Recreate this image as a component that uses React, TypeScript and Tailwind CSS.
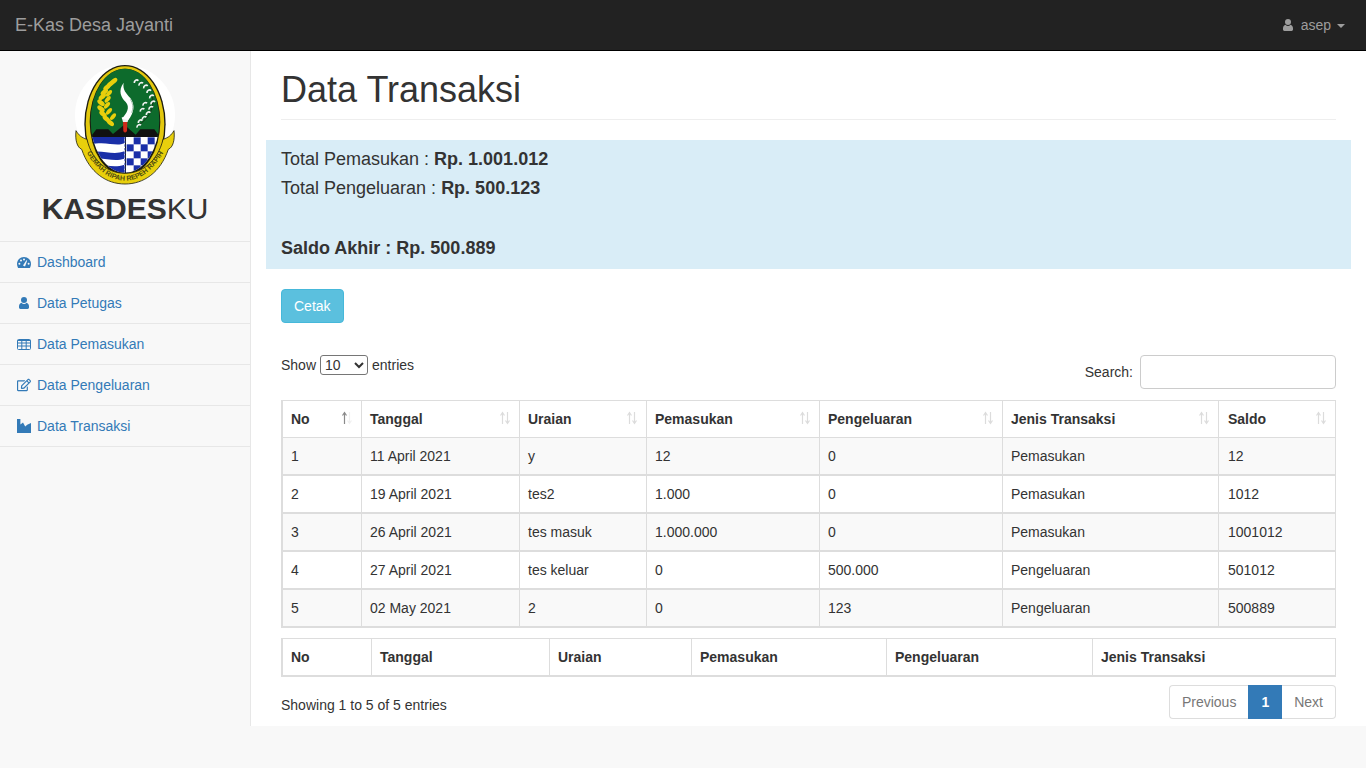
import { FaRegEdit } from 'react-icons/fa';

function GaugeIcon() {
  return (
    <svg width="14" height="11" viewBox="0 0 14 11" fill="currentColor">
      <path d="M7 0C3 0 0 3 0 7c0 1.5.4 2.8 1.1 4h11.8c.7-1.2 1.1-2.5 1.1-4 0-4-3-7-7-7z" />
      <g fill="#f8f8f8">
        <circle cx="2.4" cy="6.8" r="1" />
        <circle cx="4" cy="3.6" r="1" />
        <circle cx="7" cy="2.4" r="1" />
        <circle cx="11.6" cy="6.8" r="1" />
        <path d="M6 8.6 9.4 3.2 10.2 3.6 8 9.4z" />
      </g>
    </svg>
  );
}

function UserIcon() {
  return (
    <svg width="10" height="12" viewBox="0 0 10 12" fill="currentColor">
      <circle cx="5" cy="3" r="3" />
      <path d="M0 10.6V9.2C0 7.4 1.1 6.2 2.5 5.8 3.2 6.6 4 7 5 7s1.8-.4 2.5-1.2c1.4.4 2.5 1.6 2.5 3.4v1.4c0 .8-.6 1.4-1.4 1.4H1.4C.6 12 0 11.4 0 10.6z" />
    </svg>
  );
}

function TableIcon() {
  return (
    <svg width="14" height="11" viewBox="0 0 14 11" fill="none" stroke="currentColor">
      <rect x="0.5" y="0.5" width="13" height="10" rx="1" />
      <path d="M.5 1.5h13M.5 4h13M.5 7h13M4.8.5v10M9.2.5v10" />
    </svg>
  );
}

function AreaIcon() {
  return (
    <svg width="14" height="14" viewBox="0 0 14 14" fill="currentColor">
      <path d="M0 0h3.4v5.4L6 3.4l2.2 4 2-1.6L14 4v10H0z" />
    </svg>
  );
}

const menu = [
  { label: 'Dashboard', icon: <GaugeIcon /> },
  { label: 'Data Petugas', icon: <UserIcon /> },
  { label: 'Data Pemasukan', icon: <TableIcon /> },
  { label: 'Data Pengeluaran', icon: <FaRegEdit className="text-[14px]" /> },
  { label: 'Data Transaksi', icon: <AreaIcon /> },
];

const columns = [
  { name: 'No', width: 'w-[79px]' },
  { name: 'Tanggal', width: 'w-[158px]' },
  { name: 'Uraian', width: 'w-[127px]' },
  { name: 'Pemasukan', width: 'w-[173px]' },
  { name: 'Pengeluaran', width: 'w-[183px]' },
  { name: 'Jenis Transaksi', width: 'w-[216px]' },
  { name: 'Saldo', width: 'w-[117px]' },
];

const footerColumns = [
  { name: 'No', width: 'w-[89px]' },
  { name: 'Tanggal', width: 'w-[178px]' },
  { name: 'Uraian', width: 'w-[142px]' },
  { name: 'Pemasukan', width: 'w-[195px]' },
  { name: 'Pengeluaran', width: 'w-[206px]' },
  { name: 'Jenis Transaksi', width: 'w-[243px]' },
];

const rows = [
  ['1', '11 April 2021', 'y', '12', '0', 'Pemasukan', '12'],
  ['2', '19 April 2021', 'tes2', '1.000', '0', 'Pemasukan', '1012'],
  ['3', '26 April 2021', 'tes masuk', '1.000.000', '0', 'Pemasukan', '1001012'],
  ['4', '27 April 2021', 'tes keluar', '0', '500.000', 'Pengeluaran', '501012'],
  ['5', '02 May 2021', '2', '0', '123', 'Pengeluaran', '500889'],
];

function SortIcon({ active }: { active?: boolean }) {
  return (
    <svg width="12" height="14" viewBox="0 0 12 14" className="absolute right-[8px] top-[10px]" fill="none" strokeWidth="1.2">
      <path d="M3.5 13V2M1.5 4.5 3.5 1.5 5.5 4.5" stroke={active ? '#8a8a8a' : '#dcdcdc'} />
      <path d="M8.5 1V12M6.5 9.5 8.5 12.5 10.5 9.5" stroke={active ? '#f0f0f0' : '#dcdcdc'} />
    </svg>
  );
}

function Logo() {
  const checks: [number, number][] = [];
  for (let r = 0; r < 6; r++) {
    for (let c = 0; c < 5; c++) {
      if ((r + c) % 2 === 1) checks.push([185 + c * 21, 232 + r * 21]);
    }
  }
  return (
    <svg width="120" height="130" viewBox="0 0 360 390" className="shrink-0">
      <defs>
        <clipPath id="inner">
          <ellipse cx="180" cy="182" rx="103" ry="156" />
        </clipPath>
      </defs>
      <circle cx="180" cy="165" r="150" fill="#ffffff" />
      <ellipse cx="180" cy="192" rx="122" ry="177" fill="#1c1c10" />
      <ellipse cx="180" cy="192" rx="118" ry="173" fill="#e3c80e" />
      <ellipse cx="180" cy="186" rx="106" ry="160" fill="#1c1c10" />
      <g clipPath="url(#inner)">
        <rect x="70" y="20" width="220" height="212" fill="#0d6b2c" />
        <path d="M76 232 94 208H130L144 222 178 194 212 224 226 208H268L286 232Z" fill="#111111" />
        <rect x="70" y="231" width="110" height="110" fill="#ffffff" />
        <path d="M70 231H178V250C150 262 120 240 70 256Z" fill="#1a2fa8" />
        <path d="M70 278C110 266 140 288 178 274V296C140 308 110 286 70 300Z" fill="#1a2fa8" />
        <path d="M70 318C110 306 140 328 178 314V345H70Z" fill="#1a2fa8" />
        <rect x="183" y="231" width="110" height="110" fill="#ffffff" />
        {checks.map(([x, y]) => (
          <rect key={`${x}-${y}`} x={x} y={y} width="21" height="21" fill="#1a2fa8" />
        ))}
        <path d="M180 231V340" stroke="#1a2fa8" strokeWidth="3" strokeDasharray="7 4" />
      </g>
      <path d="M33 212C42 226 48 232 66 238 82 306 130 340 180 340 230 340 278 306 294 238 312 232 318 226 327 212 330 240 324 262 310 268 286 338 236 372 180 372 124 372 74 338 50 268 36 262 30 240 33 212Z" fill="#e8cf0c" stroke="#24240e" strokeWidth="2.5" />
      <path id="ribbonText" d="M50 250C86 326 132 362 180 362 228 362 274 326 310 250" fill="none" />
      <text fontFamily="'Liberation Sans', sans-serif" fontSize="21" fontWeight="700" fill="#4f4d10">
        <textPath href="#ribbonText" startOffset="50%" textAnchor="middle">GEMAH RIPAH REPEH RAPIH</textPath>
      </text>
      <path d="M174 186H187L186 214 180 218 175 214Z" fill="#d02a1a" />
      <path d="M170 172H192L188 186H174Z" fill="#f0f0f0" />
      <path d="M176 68C158 92 168 112 182 126 196 142 186 160 170 176L190 180C206 160 212 136 196 114 184 100 172 90 176 68Z" fill="#ffffff" />
      <path d="M196 118C204 130 206 144 200 158" stroke="#9fbda7" strokeWidth="3" fill="none" />
      <path d="M150 62C122 78 106 112 112 150 118 172 132 186 148 192" stroke="#1c1c10" strokeWidth="2" fill="none" />
      {[[146, 64], [136, 72], [126, 82], [118, 96], [112, 110], [108, 128], [108, 146], [114, 162], [124, 176], [136, 188]].map(([x, y], i) => (
        <ellipse key={i} cx={x} cy={y} rx="13" ry="7" fill="#e8cf0c" transform={`rotate(${i < 5 ? -40 : 40} ${x} ${y})`} />
      ))}
      {[[132, 100], [128, 118], [126, 136], [132, 154], [144, 170]].map(([x, y], i) => (
        <ellipse key={i} cx={x} cy={y} rx="12" ry="6" fill="#e8cf0c" transform={`rotate(-50 ${x} ${y})`} />
      ))}
      <path d="M262 110C268 140 258 172 214 200" stroke="#1c1c10" strokeWidth="2" fill="none" />
      {[[214, 64], [228, 72], [242, 80], [252, 94], [260, 110], [264, 128], [258, 144], [250, 160], [238, 174], [226, 184], [222, 198], [232, 150], [240, 132]].map(([x, y], i) => (
        <path key={i} d={`M${x - 6} ${y + 5}C${x - 7} ${y - 3} ${x + 2} ${y - 7} ${x + 6} ${y - 2}`} stroke="#f4f4f4" strokeWidth="5" fill="none" />
      ))}
    </svg>
  );
}

export default function App() {
  return (
    <div className="min-h-[768px] bg-[#f8f8f8] font-['Liberation_Sans',Arial,sans-serif] text-[14px] leading-[20px] text-[#333333]">
      <nav className="flex h-[51px] items-center justify-between border-b border-black bg-[#222222] pl-[15px] pr-[21px]">
        <span className="text-[18px] text-[#9d9d9d]">E-Kas Desa Jayanti</span>
        <div className="flex items-center text-[#9d9d9d]">
          <span className="mr-[8px]"><UserIcon /></span>
          <span>asep</span>
          <span className="ml-[6px] mt-[1px] h-0 w-0 border-x-[4px] border-t-[4px] border-x-transparent border-t-[#9d9d9d]" />
        </div>
      </nav>

      <div className="flex items-start">
        <aside className="w-[250px] shrink-0">
          <div className="flex flex-col items-center pt-[9px]">
            <Logo />
            <div className="mt-[1px] text-[30px] leading-[36px]">
              <b>KASDES</b>KU
            </div>
          </div>
          <ul className="mt-[14px] border-t border-[#e7e7e7]">
            {menu.map(({ label, icon }) => (
              <li key={label} className="flex h-[41px] items-center border-b border-[#e7e7e7] pl-[17px] text-[#337ab7]">
                <span className="flex w-[14px] justify-center">{icon}</span>
                <span className="ml-[6px]">{label}</span>
              </li>
            ))}
          </ul>
        </aside>

        <main className="h-[675px] w-[1116px] border-l border-[#e7e7e7] bg-white px-[15px]">
          <h1 className="mx-[15px] border-b border-[#eeeeee] pt-[19px] pb-[9px] text-[36px] leading-[40px] font-medium">Data Transaksi</h1>

          <div className="mt-[20px] h-[129px] bg-[#d9edf7] pt-[4px] pl-[15px] text-[18px] leading-[30px]">
            <div className="h-[29px]">Total Pemasukan : <b>Rp. 1.001.012</b></div>
            <div>Total Pengeluaran : <b>Rp. 500.123</b></div>
            <div className="h-[30px]" />
            <div><b>Saldo Akhir : Rp. 500.889</b></div>
          </div>

          <div className="mx-[15px]">
            <button className="mt-[20px] h-[34px] rounded-[4px] border border-[#46b8da] bg-[#5bc0de] px-[12px] text-white">Cetak</button>

            <div className="mt-[32px] flex h-[34px] items-start justify-between">
              <div className="flex items-center">
                Show
                <select className="mx-[4px] h-[20px] w-[48px] rounded-[3px] border border-[#767676] bg-white text-[14px] leading-none">
                  <option>10</option>
                </select>
                entries
              </div>
              <div className="flex items-center">
                <span>Search:</span>
                <input className="ml-[7px] h-[34px] w-[196px] rounded-[4px] border border-[#cccccc] bg-white" />
              </div>
            </div>

            <table className="mt-[11px] w-[1055px] table-fixed border-separate border-spacing-0 border-t border-l-2 border-[#dddddd]">
              <thead>
                <tr>
                  {columns.map((col, i) => (
                    <th key={col.name} className={`${col.width} relative h-[37px] border-r border-b border-[#dddddd] px-[8px] text-left font-bold last:pl-[9px]`}>
                      {col.name}
                      <SortIcon active={i === 0} />
                    </th>
                  ))}
                </tr>
              </thead>
              <tbody>
                {rows.map((row, r) => (
                  <tr key={row[0]} className={r % 2 === 0 ? 'bg-[#f9f9f9]' : 'bg-white'}>
                    {row.map((cell, c) => (
                      <td key={c} className="h-[38px] border-r border-b-2 border-[#dddddd] px-[8px] last:pl-[9px]">{cell}</td>
                    ))}
                  </tr>
                ))}
              </tbody>
            </table>

            <table className="mt-[10px] w-[1055px] table-fixed border-separate border-spacing-0 border-t border-l-2 border-[#dddddd]">
              <tfoot>
                <tr>
                  {footerColumns.map((col) => (
                    <th key={col.name} className={`${col.width} h-[38px] border-r border-b-2 border-[#dddddd] px-[8px] text-left font-bold`}>{col.name}</th>
                  ))}
                </tr>
              </tfoot>
            </table>

            <div className="mt-[8px] flex items-start justify-between">
              <span className="mt-[10px]">Showing 1 to 5 of 5 entries</span>
              <div className="flex h-[34px] items-stretch">
                <span className="flex items-center rounded-l-[4px] border border-r-0 border-[#dddddd] px-[12px] text-[#777777]">Previous</span>
                <span className="flex items-center border border-[#337ab7] bg-[#337ab7] px-[12px] font-bold text-white">1</span>
                <span className="flex items-center rounded-r-[4px] border border-l-0 border-[#dddddd] px-[12px] text-[#777777]">Next</span>
              </div>
            </div>
          </div>
        </main>
      </div>
    </div>
  );
}
